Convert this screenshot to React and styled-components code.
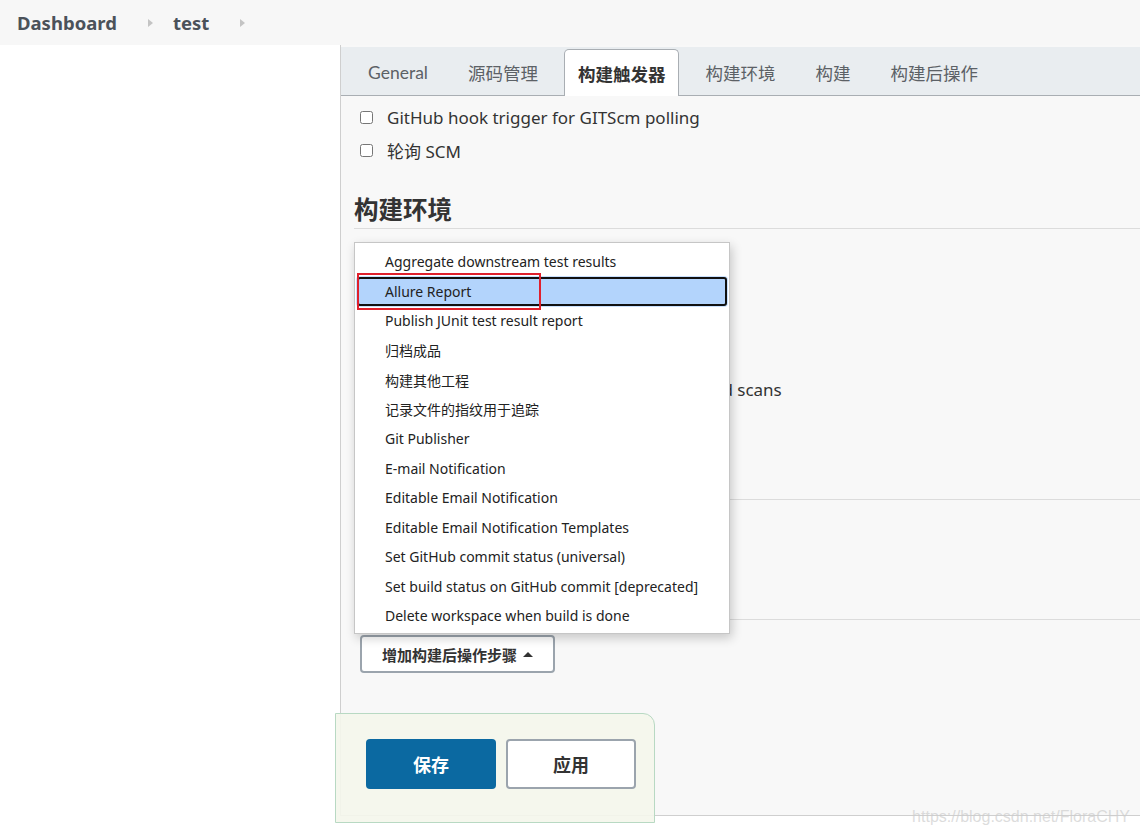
import React from "react";
import styled, { createGlobalStyle } from "styled-components";

const GlobalStyle = createGlobalStyle`
  html, body {
    margin: 0;
    padding: 0;
    background: #ffffff;
    font-family: "Noto Sans", "Noto Sans CJK SC", sans-serif;
    color: #333333;
    overflow: hidden;
  }
  * { box-sizing: border-box; }
`;

const tabs = ["General", "源码管理", "构建触发器", "构建环境", "构建", "构建后操作"];

const envOptions = [
  "Delete workspace before build starts",
  "Use secret text(s) or file(s)",
  "Abort the build if it's stuck",
  "Add timestamps to the Console Output",
  "Inspect build log for published Gradle build scans",
  "With Ant",
];

const menuItems = [
  "Aggregate downstream test results",
  "Allure Report",
  "Publish JUnit test result report",
  "归档成品",
  "构建其他工程",
  "记录文件的指纹用于追踪",
  "Git Publisher",
  "E-mail Notification",
  "Editable Email Notification",
  "Editable Email Notification Templates",
  "Set GitHub commit status (universal)",
  "Set build status on GitHub commit [deprecated]",
  "Delete workspace when build is done",
];

export default function App() {
  return (
    <Page>
      <GlobalStyle />
      <Breadcrumbs>
        <Crumb>Dashboard</Crumb>
        <Chevron />
        <Crumb>test</Crumb>
        <Chevron />
      </Breadcrumbs>
      <Body>
        <Sidebar />
        <Main>
          <TabBar>
            {tabs.map((t, i) => (
              <Tab key={t} active={i === 2}>
                {t}
              </Tab>
            ))}
          </TabBar>
          <Content>
            <CheckRows top={5}>
              <CheckRow>
                <input type="checkbox" />
                <span>GitHub hook trigger for GITScm polling</span>
              </CheckRow>
              <CheckRow>
                <input type="checkbox" />
                <span>轮询 SCM</span>
              </CheckRow>
            </CheckRows>

            <SectionHeading top={27}>构建环境</SectionHeading>
            <CheckRows top={12}>
              {envOptions.map((o) => (
                <CheckRow key={o}>
                  <input type="checkbox" />
                  <span>{o}</span>
                </CheckRow>
              ))}
            </CheckRows>

            <SectionHeading top={26}>构建</SectionHeading>
            <AddButton top={16}>
              增加构建步骤 <Caret down />
            </AddButton>

            <SectionHeading top={31}>构建后操作</SectionHeading>
            <AddButton top={15}>
              增加构建后操作步骤 <Caret />
            </AddButton>
          </Content>

          <Menu>
            {menuItems.map((m) => (
              <MenuItem key={m} selected={m === "Allure Report"}>
                {m}
              </MenuItem>
            ))}
          </Menu>
          <Highlight />

          <BottomBar>
            <SaveButton primary>保存</SaveButton>
            <SaveButton>应用</SaveButton>
          </BottomBar>
        </Main>
      </Body>
      <Watermark>https://blog.csdn.net/FloraCHY</Watermark>
    </Page>
  );
}

const Page = styled.div`
  position: relative;
  width: 1140px;
  height: 839px;
`;

const Breadcrumbs = styled.div`
  height: 45px;
  background: #f7f7f7;
  display: flex;
  align-items: center;
  padding-left: 17px;
`;

const Crumb = styled.span`
  font-size: 18.5px;
  font-weight: 700;
  color: #4b525a;
`;

const Chevron = styled.span`
  width: 0;
  height: 0;
  margin: 0 20px 0 31px;
  border-top: 4.5px solid transparent;
  border-bottom: 4.5px solid transparent;
  border-left: 5px solid #c4c4c4;
`;

const Body = styled.div`
  display: flex;
`;

const Sidebar = styled.div`
  width: 340px;
  flex: none;
`;

const Main = styled.div`
  position: relative;
  flex: 1;
  height: 771px;
  background: #f8f8f8;
  border-left: 1px solid #cfcfcf;
  border-bottom: 1px solid #cfcfcf;
`;

const TabBar = styled.div`
  margin-top: 2px;
  height: 49px;
  background: #e9edf0;
  border-bottom: 1px solid #a9aeb3;
  display: flex;
  align-items: flex-end;
  gap: 12px;
  padding-left: 13px;
`;

const Tab = styled.div`
  height: ${(p) => (p.active ? "47px" : "46px")};
  margin-bottom: ${(p) => (p.active ? "-1px" : "0")};
  display: flex;
  align-items: center;
  padding: 0 13px;
  font-family: "Lato", "Noto Sans CJK SC", sans-serif;
  font-size: 17.5px;
  color: ${(p) => (p.active ? "#333" : "#5c6166")};
  font-weight: ${(p) => (p.active ? 700 : 400)};
  background: ${(p) => (p.active ? "#ffffff" : "transparent")};
  border: 1px solid ${(p) => (p.active ? "#a9aeb3" : "transparent")};
  border-bottom: none;
  border-radius: 5px 5px 0 0;
`;

const Content = styled.div`
  padding-left: 13px;
`;

const CheckRows = styled.div`
  margin-top: ${(p) => p.top}px;
  display: flex;
  flex-direction: column;
`;

const CheckRow = styled.label`
  height: 33px;
  display: flex;
  align-items: center;
  font-size: 17px;
  color: #333;

  input {
    margin: 0 14px 0 6px;
    width: 13px;
    height: 13px;
  }
`;

const SectionHeading = styled.h2`
  margin: ${(p) => p.top}px 0 0;
  height: 35px;
  line-height: 32px;
  font-size: 24.5px;
  font-weight: 700;
  color: #333;
  border-bottom: 1px solid #dcdcdc;
`;

const AddButton = styled.button`
  margin: ${(p) => p.top}px 0 0 6px;
  height: 38px;
  padding: 0 20px;
  display: flex;
  align-items: center;
  gap: 6px;
  background: #ffffff;
  border: 2px solid #9ba4ad;
  border-radius: 4px;
  font-family: inherit;
  font-size: 15px;
  font-weight: 700;
  color: #333;
`;

const Caret = styled.span`
  width: 0;
  height: 0;
  border-left: 5px solid transparent;
  border-right: 5px solid transparent;
  ${(p) =>
    p.down ? "border-top: 5px solid #333;" : "border-bottom: 5px solid #333;"}
`;

const Menu = styled.div`
  position: absolute;
  left: 13px;
  top: 197px;
  width: 376px;
  height: 392px;
  padding: 4px 0;
  background: #ffffff;
  border: 1px solid #c6c6c6;
  box-shadow: 2px 4px 10px rgba(0, 0, 0, 0.2);
`;

const MenuItem = styled.div`
  height: 29.5px;
  margin: 0 2px;
  padding-left: 28px;
  display: flex;
  align-items: center;
  font-size: 14px;
  color: #222;
  white-space: nowrap;
  border-radius: 3px;
  ${(p) =>
    p.selected &&
    `
    background: #b3d4fc;
    border: 2px solid #111;
    padding-left: 26px;
    box-shadow: 0 0 0 1px #c9e0fd;
  `}
`;

const Highlight = styled.div`
  position: absolute;
  left: 16px;
  top: 228px;
  width: 184px;
  height: 37px;
  border: 2px solid #e0202c;
  pointer-events: none;
`;

const BottomBar = styled.div`
  position: absolute;
  left: -6px;
  top: 668px;
  width: 320px;
  height: 110px;
  display: flex;
  align-items: flex-start;
  gap: 10px;
  padding: 25px 0 0 30px;
  background: rgba(244, 246, 236, 0.92);
  border: 1px solid #b8d9c3;
  border-top-right-radius: 12px;
`;

const SaveButton = styled.button`
  width: 130px;
  height: 50px;
  border-radius: 4px;
  font-family: inherit;
  font-size: 18px;
  font-weight: 700;
  color: ${(p) => (p.primary ? "#ffffff" : "#333")};
  background: ${(p) => (p.primary ? "#0b69a1" : "#ffffff")};
  border: ${(p) => (p.primary ? "none" : "2px solid #9ba4ad")};
`;

const Watermark = styled.div`
  position: absolute;
  right: 10px;
  top: 808px;
  font-family: "Liberation Sans", Arial, sans-serif;
  font-size: 16px;
  color: rgba(205, 205, 205, 0.7);
  pointer-events: none;
`;
